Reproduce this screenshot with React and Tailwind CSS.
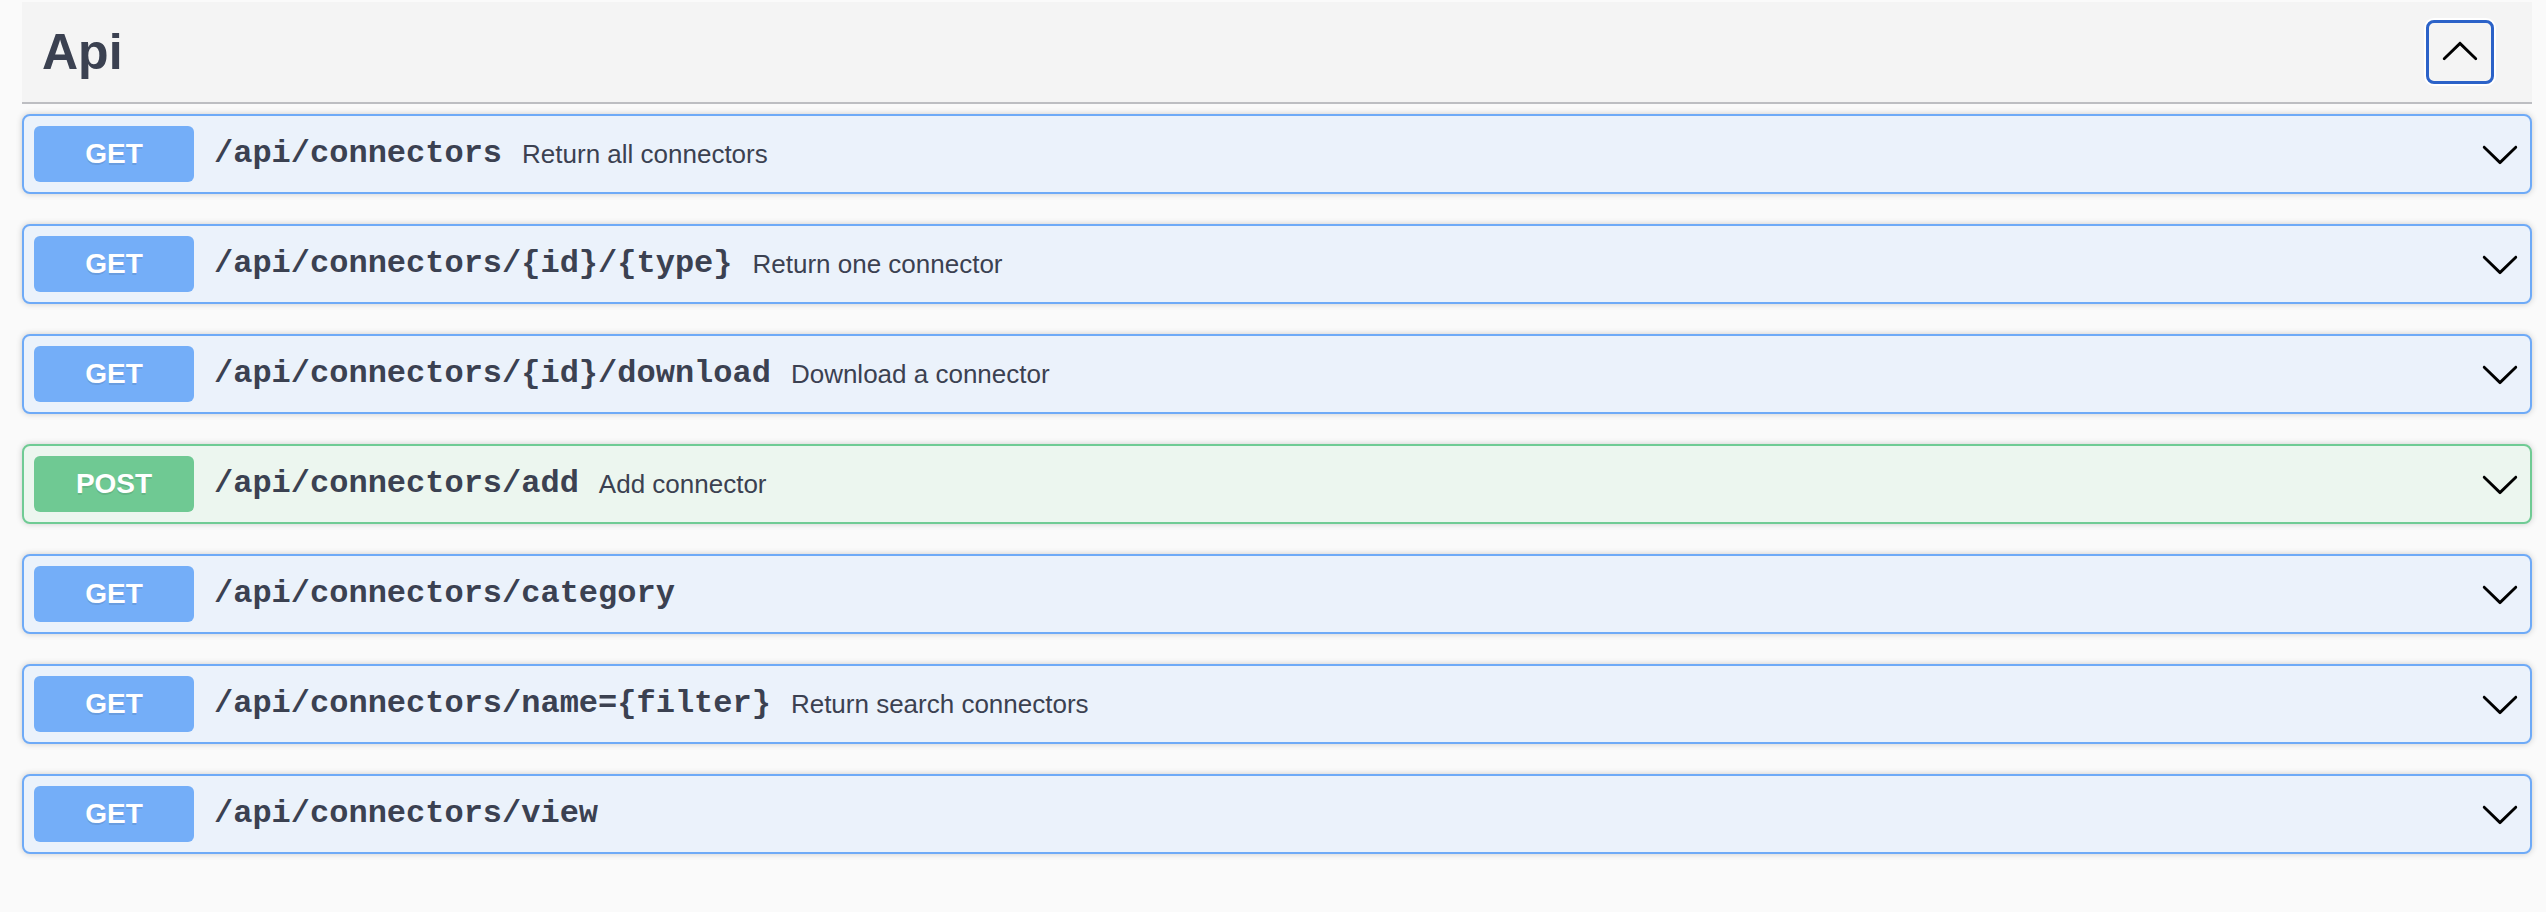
import React from "react";

const rows = [
  { method: "GET", path: "/api/connectors", desc: "Return all connectors" },
  { method: "GET", path: "/api/connectors/{id}/{type}", desc: "Return one connector" },
  { method: "GET", path: "/api/connectors/{id}/download", desc: "Download a connector" },
  { method: "POST", path: "/api/connectors/add", desc: "Add connector" },
  { method: "GET", path: "/api/connectors/category", desc: "" },
  { method: "GET", path: "/api/connectors/name={filter}", desc: "Return search connectors" },
  { method: "GET", path: "/api/connectors/view", desc: "" },
];

const Arrow = ({ up }) => (
  <svg width="40" height="40" viewBox="0 0 20 20" className={up ? "rotate-180" : ""} aria-hidden="true">
    <path
      fill="#000"
      d="M17.418 6.109c.272-.268.709-.268.979 0s.271.701 0 .969l-7.908 7.83c-.27.268-.707.268-.979 0l-7.908-7.83c-.27-.268-.27-.701 0-.969.271-.268.709-.268.979 0L10 13.25l7.418-7.141z"
    />
  </svg>
);

function Row({ method, path, desc }) {
  const post = method === "POST";
  return (
    <div
      className={
        "flex items-center p-[10px] border-2 rounded-[8px] shadow-[0_0_6px_rgba(0,0,0,0.19)] mb-[30px] " +
        (post ? "border-[#6fcb94] bg-[#ecf6ef]" : "border-[#6eaaf7] bg-[#ebf2fb]")
      }
    >
      <div
        className={
          "w-[160px] h-[56px] rounded-[6px] flex items-center justify-center text-white text-[28px] font-bold [text-shadow:0_2px_0_rgba(0,0,0,0.1)] " +
          (post ? "bg-[#6fc993]" : "bg-[#74aef8]")
        }
        style={{ fontFamily: '"Liberation Sans", Arial, sans-serif' }}
      >
        {method}
      </div>
      <span
        className="px-[20px] text-[32px] font-bold text-[#3b4151] leading-none"
        style={{ fontFamily: '"Liberation Mono", "Courier New", monospace' }}
      >
        {path}
      </span>
      {desc ? (
        <span
          className="text-[26px] text-[#3b4151] leading-none"
          style={{ fontFamily: '"Liberation Sans", Arial, sans-serif' }}
        >
          {desc}
        </span>
      ) : null}
      <div className="flex-1" />
      <Arrow />
    </div>
  );
}

export default function App() {
  return (
    <div className="min-h-[912px] bg-[#fafafa] pt-[2px] pl-[22px] pr-[14px]">
      <div className="h-[102px] bg-[#f4f4f4] border-b-2 border-[#bdbec2] flex items-center pl-[20px] pr-[38px] mb-[10px]">
        <h3
          className="text-[50px] font-bold text-[#3b4151] leading-none"
          style={{ fontFamily: '"Liberation Sans", Arial, sans-serif' }}
        >
          Api
        </h3>
        <div className="flex-1" />
        <button className="w-[68px] h-[64px] border-[3px] border-[#2b62c8] rounded-[8px] ring-2 ring-white flex items-center justify-center bg-transparent">
          <Arrow up />
        </button>
      </div>
      {rows.map((r, i) => (
        <Row key={i} {...r} />
      ))}
    </div>
  );
}
